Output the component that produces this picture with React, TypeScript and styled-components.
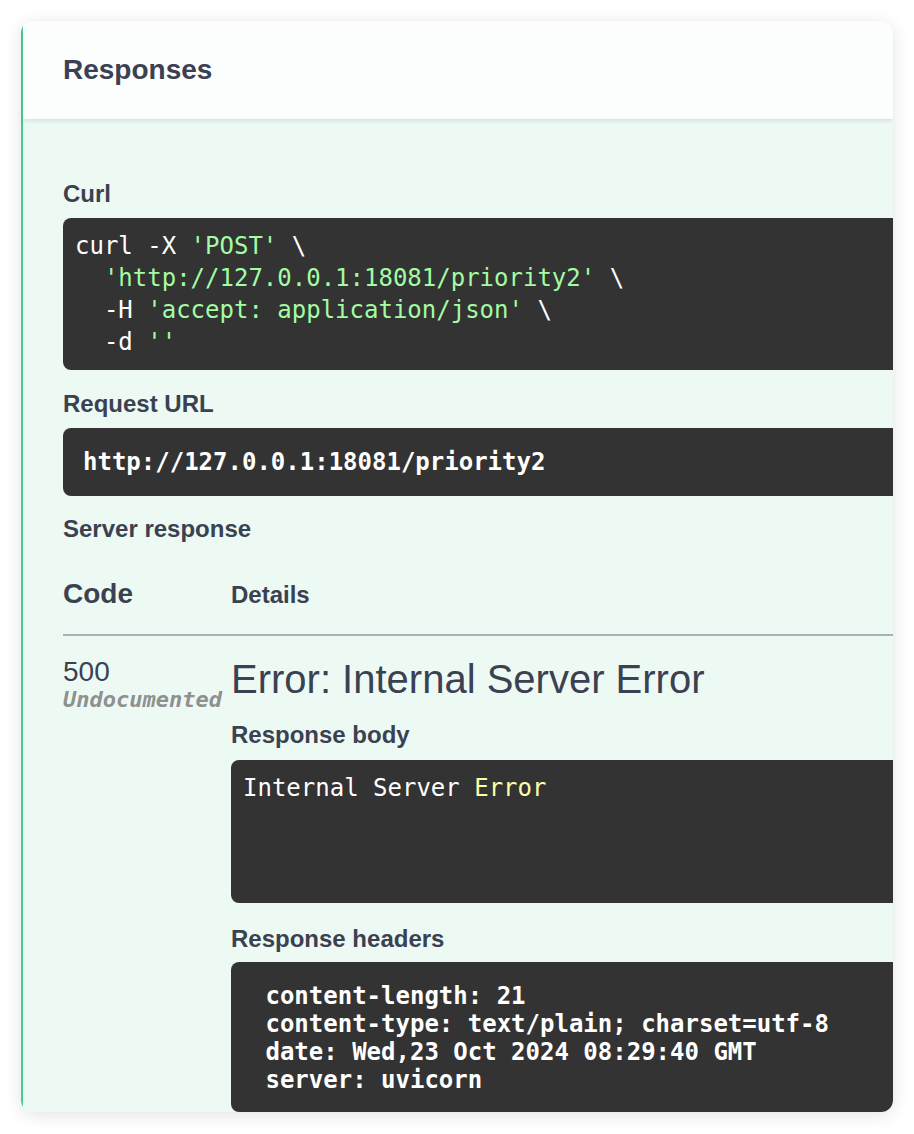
import React from "react";
import styled, { createGlobalStyle } from "styled-components";

const Global = createGlobalStyle`
  html, body {
    margin: 0;
    padding: 0;
    background: #ffffff;
  }
  body {
    font-family: "Liberation Sans", Arial, Helvetica, sans-serif;
    color: #3b4151;
  }
`;

const Frame = styled.div`
  margin: 21px;
  width: 872px;
  border-radius: 12px;
  overflow: hidden;
  background: #ffffff;
  box-shadow: 0 3px 18px rgba(0, 0, 0, 0.11), 0 0 2px rgba(0, 0, 0, 0.04);
`;

const Opblock = styled.section`
  border-left: 2px solid #49cc90;
  background: #edfaf4;
`;

const SectionHeader = styled.header`
  position: relative;
  z-index: 1;
  display: flex;
  align-items: center;
  min-height: 98px;
  padding: 0 40px;
  background: rgba(255, 255, 255, 0.8);
  box-shadow: 0 2px 4px rgba(0, 0, 0, 0.1);
`;

const Title = styled.h4`
  margin: 0;
  font-size: 28px;
  line-height: 32px;
  font-weight: 700;
  color: #3b4151;
`;

const Inner = styled.div`
  padding: 61px 0 0 40px;
`;

const Label = styled.h4<{ $gap?: number }>`
  margin: ${(p) => p.$gap ?? 0}px 0 0 0;
  font-size: 24px;
  line-height: 28px;
  font-weight: 700;
  color: #3b4151;
`;

const CodeBlock = styled.pre<{ $gap?: number; $bold?: boolean; $pad?: string; $minH?: number }>`
  margin: ${(p) => p.$gap ?? 10}px -16px 0 0;
  padding: ${(p) => p.$pad ?? "12px"};
  min-height: ${(p) => p.$minH ?? 0}px;
  box-sizing: border-box;
  background: #333333;
  color: #ffffff;
  border-radius: 8px;
  font-family: "DejaVu Sans Mono", Menlo, monospace;
  font-size: 24px;
  line-height: ${(p) => (p.$bold ? 28 : 32)}px;
  font-weight: ${(p) => (p.$bold ? 700 : 400)};
  white-space: pre;
  overflow: hidden;
`;

const CodeLine = styled.span`
  display: block;
`;

const Str = styled.span`
  color: #a2fca2;
`;

const Keyword = styled.span`
  color: #ffffaa;
`;

const Grid = styled.div`
  display: grid;
  grid-template-columns: 168px 1fr;
`;

const TableHead = styled(Grid)`
  align-items: baseline;
  margin-top: 35px;
  padding-bottom: 24px;
  border-bottom: 2px solid #aab1b4;
`;

const ColCode = styled.div`
  font-size: 28px;
  line-height: 32px;
  font-weight: 700;
  color: #3b4151;
`;

const ColDetails = styled.div`
  font-size: 24px;
  line-height: 28px;
  font-weight: 700;
  color: #3b4151;
`;

const TableRow = styled(Grid)`
  padding-top: 20px;
  align-items: start;
`;

const StatusCell = styled.div`
  display: flex;
  flex-direction: column;
`;

const StatusCode = styled.span`
  font-size: 28px;
  line-height: 32px;
  font-weight: 400;
  color: #3b4151;
`;

const Undocumented = styled.span`
  font-family: "DejaVu Sans Mono", Menlo, monospace;
  font-size: 22px;
  line-height: 24px;
  font-weight: 700;
  font-style: italic;
  color: #909090;
`;

const DetailsCell = styled.div`
  display: flex;
  flex-direction: column;
  min-width: 0;
`;

const ErrorTitle = styled.h5`
  margin: 0;
  font-size: 40px;
  line-height: 46px;
  font-weight: 400;
  color: #3b4151;
`;

const headerLines = [
  " content-length: 21",
  " content-type: text/plain; charset=utf-8",
  " date: Wed,23 Oct 2024 08:29:40 GMT",
  " server: uvicorn",
];

export default function App() {
  return (
    <>
      <Global />
      <Frame>
        <Opblock>
          <SectionHeader>
            <Title>Responses</Title>
          </SectionHeader>
          <Inner>
            <Label>Curl</Label>
            <CodeBlock>
              <CodeLine>
                {"curl -X "}
                <Str>'POST'</Str>
                {" \\"}
              </CodeLine>
              <CodeLine>
                {"  "}
                <Str>'http://127.0.0.1:18081/priority2'</Str>
                {" \\"}
              </CodeLine>
              <CodeLine>
                {"  -H "}
                <Str>'accept: application/json'</Str>
                {" \\"}
              </CodeLine>
              <CodeLine>
                {"  -d "}
                <Str>''</Str>
              </CodeLine>
            </CodeBlock>

            <Label $gap={20}>Request URL</Label>
            <CodeBlock $bold $pad="20px">
              http://127.0.0.1:18081/priority2
            </CodeBlock>

            <Label $gap={19}>Server response</Label>

            <TableHead>
              <ColCode>Code</ColCode>
              <ColDetails>Details</ColDetails>
            </TableHead>

            <TableRow>
              <StatusCell>
                <StatusCode>500</StatusCode>
                <Undocumented>Undocumented</Undocumented>
              </StatusCell>
              <DetailsCell>
                <ErrorTitle>Error: Internal Server Error</ErrorTitle>
                <Label $gap={19}>Response body</Label>
                <CodeBlock $gap={11} $minH={143}>
                  <CodeLine>
                    {"Internal Server "}
                    <Keyword>Error</Keyword>
                  </CodeLine>
                </CodeBlock>
                <Label $gap={22}>Response headers</Label>
                <CodeBlock $gap={9} $bold $pad="20px 20px 18px 20px">
                  {headerLines.map((line) => (
                    <CodeLine key={line}>{line}</CodeLine>
                  ))}
                </CodeBlock>
              </DetailsCell>
            </TableRow>
          </Inner>
        </Opblock>
      </Frame>
    </>
  );
}
